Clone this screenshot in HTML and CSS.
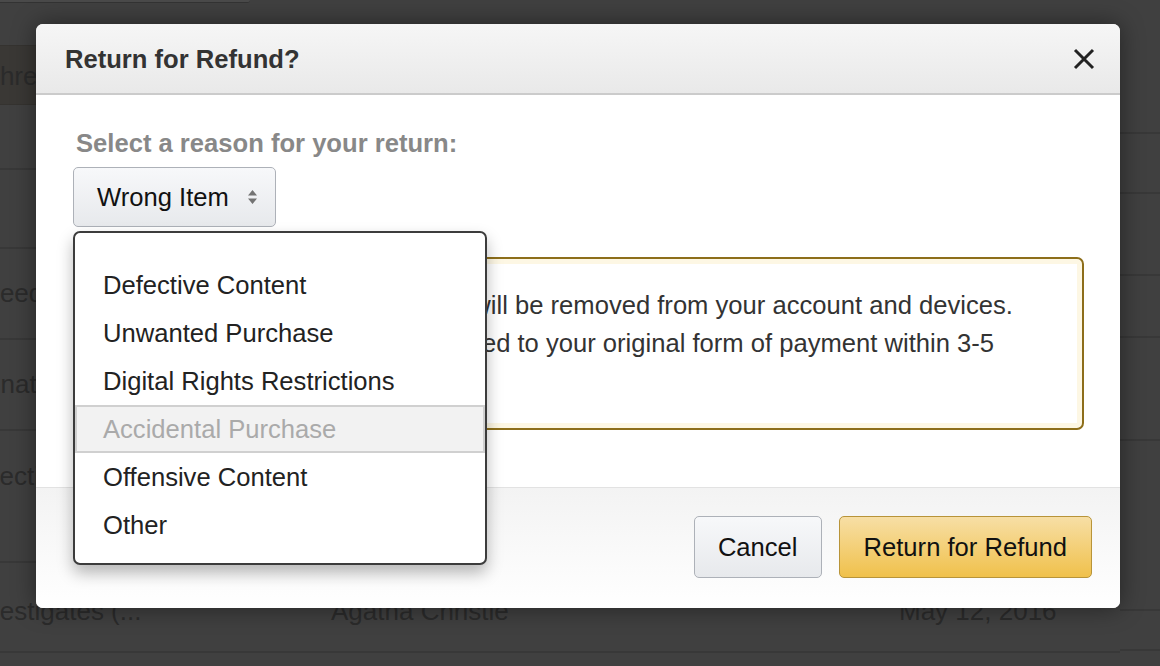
FILE: index.html
```html
<!DOCTYPE html>
<html lang="en">
<head>
    <meta charset="UTF-8">
    <title>Return for Refund</title>
    <link rel="stylesheet" href="styles.css">
</head>
<body>
    <div class="page">
        <div class="main">
            <div class="topbar"></div>
            <div class="search">Threads</div>
            <div class="row r-first"></div>
            <div class="row r-mid"></div>
            <div class="row"><span class="title t-greedy">Greedy Dreams</span></div>
            <div class="row"><span class="title t-sig">Signature Series</span></div>
            <div class="row r-tall"><span class="title t-sel">Selections</span></div>
            <div class="row r-last">
                <span class="title t-poirot">Poirot Investigates (...</span>
                <span class="author">Agatha Christie</span>
                <span class="date">May 12, 2016</span>
            </div>
        </div>
        <div class="side">
            <div class="s s1"></div>
            <div class="s s2"></div>
            <div class="s s3"></div>
            <div class="s s4"></div>
            <div class="s s5"></div>
            <div class="s s6"></div>
            <div class="s s7"></div>
        </div>
    </div>

    <div class="modal">
        <div class="modal-header">
            <h2>Return for Refund?</h2>
            <button class="close" aria-label="Close">
                <svg width="22" height="22" viewBox="0 0 22 22">
                    <path d="M2 2 L20 20 M20 2 L2 20" stroke="#222" stroke-width="3" fill="none"/>
                </svg>
            </button>
        </div>

        <div class="modal-body">
            <label class="reason-label">Select a reason for your return:</label>
            <div class="select-wrap">
                <div class="select">
                    <span>Wrong Item</span>
                    <svg width="9" height="18" viewBox="0 0 9 18">
                        <path d="M0 7.5 L4.5 2 L9 7.5 Z M0 10.5 L4.5 16 L9 10.5 Z" fill="#737373"/>
                    </svg>
                </div>
                <ul class="dropdown">
                    <li>Defective Content</li>
                    <li>Unwanted Purchase</li>
                    <li>Digital Rights Restrictions</li>
                    <li class="active">Accidental Purchase</li>
                    <li>Offensive Content</li>
                    <li>Other</li>
                </ul>
            </div>
            <div class="alert">
                &ldquo;The Mysterious Affair at Styles&rdquo; will be removed from your account and devices.
                Your refund of $4.99 will be credited to your original form of payment within 3-5 business days.
            </div>
        </div>

        <div class="modal-footer">
            <button class="btn">Cancel</button>
            <button class="btn btn-primary">Return for Refund</button>
        </div>
    </div>
</body>
</html>
```

FILE: styles.css
```css
html, body {
    margin: 0;
    padding: 0;
}

body {
    width: 1160px;
    height: 666px;
    overflow: hidden;
    position: relative;
    background-color: #404040;
    font-family: "Liberation Sans", Arial, Helvetica, sans-serif;
}

/* dimmed page behind the dialog */
.page {
    display: flex;
    height: 666px;
}

.main {
    flex: 1;
    color: #2b2b2b;
    font-size: 26px;
}

.topbar {
    width: 250px;
    height: 2px;
    background-color: #4a4a4a;
    border-bottom: 1px solid #333;
    border-radius: 0 0 4px 0;
}

.search {
    margin-top: 42px;
    height: 60px;
    line-height: 60px;
    background-color: #3a3835;
    border-top: 1px solid #353330;
    border-bottom: 1px solid #353330;
    box-sizing: border-box;
    text-indent: -16px;
    overflow: hidden;
}

.row {
    height: 91px;
    border-bottom: 2px solid #383838;
    box-sizing: border-box;
    display: flex;
    align-items: center;
}

.r-first {
    height: 65px;
}

.r-mid {
    height: 79px;
}

.r-tall {
    height: 132px;
    align-items: flex-start;
    padding-top: 30px;
}

.r-last {
    height: 90px;
    padding-top: 8px;
}

.title {
    width: 330px;
    white-space: nowrap;
}

.t-greedy { margin-left: -29px; }
.t-sig { margin-left: -37px; }
.t-sel { margin-left: -38px; }

.t-poirot {
    margin-left: -110px;
    width: 441px;
}

.author {
    width: 568px;
}

.date {
    white-space: nowrap;
}

.side {
    width: 40px;
}

.s {
    border-bottom: 2px solid #383838;
    box-sizing: border-box;
}

.s1 { height: 134px; }
.s2 { height: 60px; }
.s3 { height: 82px; }
.s4 { height: 62px; }
.s5 { height: 103px; }
.s6 { height: 170px; }
.s7 { height: 40px; }

/* dialog */
.modal {
    position: absolute;
    top: 24px;
    left: 36px;
    width: 1084px;
    background-color: #fff;
    border-radius: 7px;
    box-shadow: 0 0 24px rgba(0, 0, 0, 0.45);
    overflow: hidden;
    color: #333;
}

.modal-header {
    height: 71px;
    box-sizing: border-box;
    display: flex;
    align-items: center;
    justify-content: space-between;
    padding: 1px 25px 0 29px;
    background: linear-gradient(#f6f6f6, #e9e9e9);
    border-bottom: 2px solid #cbcbcb;
}

.modal-header h2 {
    margin: 0;
    font-size: 25.6px;
    font-weight: bold;
    color: #333;
}

.close {
    border: none;
    background: none;
    padding: 0;
    width: 22px;
    height: 22px;
    cursor: pointer;
}

.close svg {
    display: block;
}

.modal-body {
    height: 392px;
    box-sizing: border-box;
    padding: 33px 36px 0 37px;
}

.reason-label {
    display: block;
    margin-left: 3px;
    font-size: 25.6px;
    line-height: 30px;
    font-weight: bold;
    color: #888;
    margin-bottom: 9px;
}

.select-wrap {
    position: relative;
    display: inline-block;
}

.select {
    display: flex;
    align-items: center;
    gap: 19px;
    height: 60px;
    box-sizing: border-box;
    padding: 0 18px 0 23px;
    border: 1px solid #adb1b8;
    border-radius: 5px;
    background: linear-gradient(#f7f8fa, #e7e9ec);
    font-size: 25.6px;
    color: #111;
}

.select svg {
    display: block;
}

.dropdown {
    position: absolute;
    top: 64px;
    left: 0;
    z-index: 2;
    width: 414px;
    box-sizing: border-box;
    margin: 0;
    padding: 28px 0 14px;
    list-style: none;
    background-color: #fff;
    border: 2px solid #3c3c3c;
    border-radius: 7px;
    box-shadow: 0 8px 16px rgba(0, 0, 0, 0.28);
}

.dropdown li {
    height: 48px;
    box-sizing: border-box;
    border: 2px solid transparent;
    padding-left: 26px;
    line-height: 44px;
    font-size: 25.6px;
    color: #222;
}

.dropdown li.active {
    background-color: #f2f2f2;
    border-color: #d0d0d0;
    color: #aaa;
}

.alert {
    margin-top: 30px;
    padding: 27px 28px 28px;
    border: 2px solid #8d6e1a;
    border-radius: 7px;
    box-shadow: inset 0 0 0 5px #fdf7e4;
    font-size: 25.6px;
    line-height: 38px;
    color: #333;
}

.modal-footer {
    height: 121px;
    box-sizing: border-box;
    display: flex;
    justify-content: flex-end;
    align-items: flex-start;
    gap: 17px;
    padding: 28px 28px 0 0;
    border-top: 1px solid #e2e2e2;
    background: linear-gradient(#f3f3f3, #fff);
}

.btn {
    height: 62px;
    padding: 0 23px;
    font-family: inherit;
    font-size: 25.6px;
    color: #111;
    border: 1px solid #adb1b8;
    border-radius: 5px;
    background: linear-gradient(#f7f8fa, #e7e9ec);
    cursor: pointer;
}

.btn-primary {
    padding: 0 24px;
    border-color: #b89439;
    background: linear-gradient(#f7dfa5, #f0c14b);
}
```
